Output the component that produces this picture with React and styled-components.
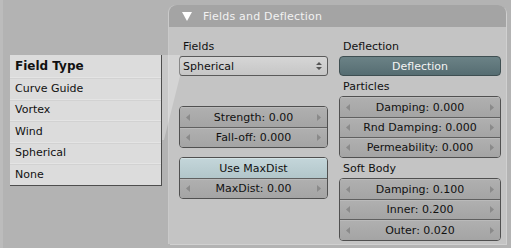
import React from 'react';
import styled, { createGlobalStyle } from 'styled-components';

const GlobalStyle = createGlobalStyle`
  html, body {
    margin: 0;
    padding: 0;
    background: #b3b3b3;
  }
  body {
    font-family: "DejaVu Sans", "Liberation Sans", sans-serif;
    font-size: 11px;
    color: #111;
  }
`;

const Screen = styled.div`
  position: relative;
  width: 511px;
  height: 248px;
  overflow: hidden;
  background: #b3b3b3;
  border-left: 3px solid #bcbcbc;
  box-sizing: border-box;
`;

const Panel = styled.div`
  position: relative;
  margin: 5px 0 0 166px;
  width: 337px;
  height: 239px;
  background: #c4c4c4;
  border-radius: 8px 8px 0 0;
  box-shadow: 1px 1px 0 #d0d0d0, -1px 0 0 #cacaca;
  display: flex;
  flex-direction: column;
`;

const Header = styled.div`
  height: 22px;
  background: #a4a4a4;
  border-radius: 8px 8px 0 0;
  display: flex;
  align-items: center;
  padding-left: 13px;
  gap: 11px;
  color: #f2f2f2;
  font-size: 11px;
  letter-spacing: 0.2px;
`;

const Body = styled.div`
  display: flex;
  gap: 11px;
  padding: 9px 5px 0 10px;
`;

const Column = styled.div`
  width: ${p => p.$w}px;
  display: flex;
  flex-direction: column;
`;

const Label = styled.div`
  height: 20px;
  display: flex;
  align-items: flex-end;
  padding: 0 0 3px 4px;
  box-sizing: border-box;
`;

const Spacer = styled.div`
  height: ${p => p.$h}px;
`;

const Dropdown = styled.div`
  height: 20px;
  box-sizing: border-box;
  border: 1px solid #5a5a5a;
  border-radius: 3px;
  background: linear-gradient(#d6d6d6, #c6c6c6);
  display: flex;
  align-items: center;
  justify-content: space-between;
  padding: 0 4px 0 3px;
`;

const Group = styled.div`
  border: 1px solid #505050;
  border-radius: 4px;
  overflow: hidden;
  display: flex;
  flex-direction: column;
`;

const Row = styled.div`
  height: ${p => p.$h || 20}px;
  box-sizing: border-box;
  display: flex;
  align-items: center;
  justify-content: space-between;
  padding: 0 6px;
  background: ${p => (p.$on ? 'linear-gradient(#c4d6da, #b2c6ca)' : 'linear-gradient(#b0b0b0, #a4a4a4)')};
  border-top: ${p => (p.$first ? 'none' : '1px solid #606060')};
  box-shadow: inset 0 1px 0 ${p => (p.$on ? '#d4e2e4' : '#bababa')};
`;

const RowText = styled.span`
  flex: 1;
  text-align: center;
`;

const ActionButton = styled.div`
  height: 20px;
  box-sizing: border-box;
  border: 1px solid #3f4f52;
  border-radius: 4px;
  background: linear-gradient(#6b8286, #566d72);
  color: #f4f4f4;
  display: flex;
  align-items: center;
  justify-content: center;
`;

const Menu = styled.div`
  position: absolute;
  left: 7px;
  top: 55px;
  width: 152px;
  background: #dcdcdc;
  border-right: 1px solid #4e4e4e;
  border-bottom: 1px solid #4e4e4e;
  display: flex;
  flex-direction: column;
  box-sizing: border-box;
`;

const MenuItem = styled.div`
  height: ${p => p.$h || 21.5}px;
  box-sizing: border-box;
  padding-left: 5px;
  display: flex;
  align-items: center;
  font-weight: ${p => (p.$title ? 'bold' : 'normal')};
  font-size: ${p => (p.$title ? '12px' : '11px')};
  border-top: ${p => (p.$title ? 'none' : '1px solid #e4e4e4')};
  box-shadow: ${p => (p.$title ? 'none' : 'inset 0 1px 0 #d2d2d2')};
`;

const Wedge = styled.svg`
  position: absolute;
  left: 0;
  top: 0;
  pointer-events: none;
`;

const Arrow = ({ dir }) => (
  <svg width="5" height="7" viewBox="0 0 5 7">
    <path d={dir === 'l' ? 'M4 0 L0 3.5 L4 7 Z' : 'M1 0 L5 3.5 L1 7 Z'} fill="#8a8a8a" />
  </svg>
);

const UpDown = () => (
  <svg width="8" height="10" viewBox="0 0 8 10">
    <path d="M1 4 L4 1 L7 4 Z M1 6 L4 9 L7 6 Z" fill="#555" />
  </svg>
);

const Slider = ({ text, first, h }) => (
  <Row $first={first} $h={h}>
    <Arrow dir="l" />
    <RowText>{text}</RowText>
    <Arrow dir="r" />
  </Row>
);

const menuItems = ['Curve Guide', 'Vortex', 'Wind', 'Spherical', 'None'];

export default function App() {
  return (
    <>
      <GlobalStyle />
      <Screen>
        <Panel>
          <Header>
            <svg width="10" height="10" viewBox="0 0 10 10">
              <path d="M0 1 L10 1 L5 10 Z" fill="#ffffff" />
            </svg>
            <span>Fields and Deflection</span>
          </Header>
          <Body>
            <Column $w={149}>
              <Label>Fields</Label>
              <Dropdown>
                <span>Spherical</span>
                <UpDown />
              </Dropdown>
              <Spacer $h={30} />
              <Group>
                <Slider first text="Strength: 0.00" />
                <Slider text="Fall-off: 0.000" />
              </Group>
              <Spacer $h={9} />
              <Group>
                <Row $first $on>
                  <RowText>Use MaxDist</RowText>
                </Row>
                <Slider text="MaxDist: 0.00" />
              </Group>
            </Column>
            <Column $w={162}>
              <Label>Deflection</Label>
              <ActionButton>Deflection</ActionButton>
              <Label>Particles</Label>
              <Group>
                <Slider first text="Damping: 0.000" />
                <Slider text="Rnd Damping: 0.000" />
                <Slider text="Permeability: 0.000" />
              </Group>
              <Label>Soft Body</Label>
              <Group>
                <Slider first text="Damping: 0.100" />
                <Slider text="Inner: 0.200" />
                <Slider text="Outer: 0.020" h={21} />
              </Group>
            </Column>
          </Body>
        </Panel>
        <Wedge width="511" height="248">
          <polygon points="159,55 177,55 177,76 161,140 159,140" fill="rgba(255,255,255,0.28)" />
        </Wedge>
        <Menu>
          <MenuItem $title $h={22}>Field Type</MenuItem>
          {menuItems.map(m => (
            <MenuItem key={m}>{m}</MenuItem>
          ))}
        </Menu>
      </Screen>
    </>
  );
}
